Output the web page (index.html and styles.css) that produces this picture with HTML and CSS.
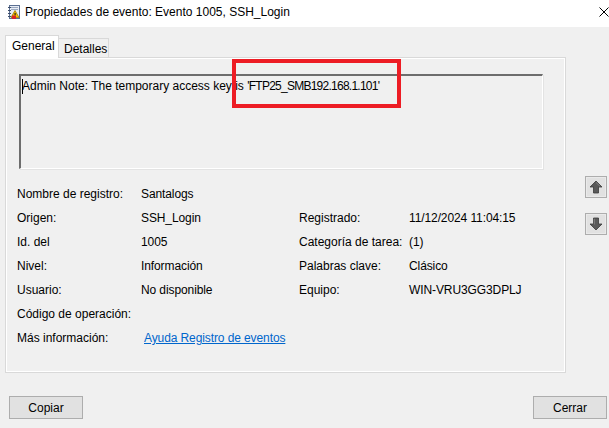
FILE: index.html
```html
<!DOCTYPE html>
<html lang="es">
<head>
<meta charset="utf-8">
<title>Propiedades de evento</title>
<link rel="stylesheet" href="styles.css">
</head>
<body>
<div class="window">
  <div class="titlebar">
    <svg class="app-icon" width="16" height="16" viewBox="0 0 16 16">
      <rect x="3.5" y="1.5" width="10" height="13" fill="#e8edf5" stroke="#5b6f92"/>
      <rect x="5" y="3" width="7" height="1" fill="#9aa8c0"/>
      <rect x="5" y="5" width="7" height="1" fill="#9aa8c0"/>
      <g fill="#3d4d6a">
        <rect x="2" y="3" width="3" height="1"/>
        <rect x="2" y="6" width="3" height="1"/>
        <rect x="2" y="9" width="3" height="1"/>
        <rect x="2" y="12" width="3" height="1"/>
      </g>
      <path d="M9 6.5 L13 13.5 L5 13.5 Z" fill="#f5c400" stroke="#a07a00" stroke-width="0.8"/>
      <rect x="8.5" y="9" width="1.2" height="2.4" fill="#222"/>
      <rect x="6" y="11.5" width="4" height="3.5" fill="#d8232a"/>
    </svg>
    <span class="title">Propiedades de evento: Evento 1005, SSH_Login</span>
    <svg class="close" width="10" height="10" viewBox="0 0 10 10">
      <path d="M0.5 0.5 L9.5 9.5 M9.5 0.5 L0.5 9.5" stroke="#000" stroke-width="1"/>
    </svg>
  </div>

  <div class="tabs">
    <div class="tab active">General</div>
    <div class="tab">Detalles</div>
  </div>

  <div class="main">
    <div class="panel">
      <div class="textbox"><span class="caret"></span>Admin Note: The temporary access key is <span class="key">'FTP25_SMB192.168.1.101'</span></div>
      <div class="fields">
        <div class="lbl">Nombre de registro:</div><div class="val">Santalogs</div><div></div><div></div>
        <div class="lbl">Origen:</div><div class="val">SSH_Login</div><div class="lbl">Registrado:</div><div class="val">11/12/2024 11:04:15</div>
        <div class="lbl">Id. del</div><div class="val">1005</div><div class="lbl">Categoría de tarea:</div><div class="val">(1)</div>
        <div class="lbl">Nivel:</div><div class="val">Información</div><div class="lbl">Palabras clave:</div><div class="val">Clásico</div>
        <div class="lbl">Usuario:</div><div class="val">No disponible</div><div class="lbl">Equipo:</div><div class="val">WIN-VRU3GG3DPLJ</div>
        <div class="lbl">Código de operación:</div><div></div><div></div><div></div>
        <div class="lbl">Más información:</div><div class="val"><a class="link" href="#">Ayuda Registro de eventos</a></div><div></div><div></div>
      </div>
    </div>
    <div class="side">
      <div class="arrow-btn">
        <svg width="16" height="16" viewBox="0 0 16 16">
          <path d="M8 2 L14 8 L10.5 8 L10.5 14 L5.5 14 L5.5 8 L2 8 Z" fill="#5a5a5a" stroke="#3a3a3a" stroke-width="0.8" stroke-linejoin="round"/>
          <path d="M8 3.5 L12 7.3" stroke="#8c8c8c" stroke-width="0.8"/>
        </svg>
      </div>
      <div class="arrow-btn">
        <svg width="16" height="16" viewBox="0 0 16 16">
          <path d="M8 14 L14 8 L10.5 8 L10.5 2 L5.5 2 L5.5 8 L2 8 Z" fill="#5a5a5a" stroke="#3a3a3a" stroke-width="0.8" stroke-linejoin="round"/>
          <path d="M6.3 2.8 L6.3 8.5" stroke="#8c8c8c" stroke-width="0.8"/>
        </svg>
      </div>
    </div>
  </div>

  <div class="footer">
    <button class="btn">Copiar</button>
    <button class="btn">Cerrar</button>
  </div>

  <div class="highlight"></div>
</div>
</body>
</html>
```

FILE: styles.css
```css
* { box-sizing: border-box; }

html, body {
  margin: 0;
  padding: 0;
}

body {
  width: 609px;
  height: 428px;
  background: #f0f0f0;
  font-family: "Liberation Sans", Arial, sans-serif;
  font-size: 12px;
  color: #000;
  overflow: hidden;
}

.window {
  position: relative;
  width: 609px;
  height: 428px;
}

.titlebar {
  height: 27px;
  background: #fff;
  display: flex;
  align-items: center;
  padding-left: 6px;
  padding-bottom: 3px;
}

.app-icon { flex: none; }

.title {
  margin-left: 3px;
  font-size: 12px;
  color: #000;
}

.close {
  margin-left: auto;
  flex: none;
}

.tabs {
  display: flex;
  align-items: flex-end;
  padding-left: 5px;
  margin-top: 8px;
  height: 22px;
}

.tab {
  height: 19px;
  border: 1px solid #d9d9d9;
  border-bottom: none;
  border-left: none;
  background: #f0f0f0;
  padding: 3px 5px 0 5px;
  width: 50px;
}

.tab.active {
  width: 54px;
  height: 23px;
  border-left: 1px solid #d9d9d9;
  background: #fff;
  padding: 3px 0 0 6px;
  position: relative;
  z-index: 1;
  margin-bottom: -1px;
}

.main {
  display: flex;
}

.panel {
  margin-left: 5px;
  width: 561px;
  height: 316px;
  border: 1px solid #d9d9d9;
  box-shadow: inset 1px 1px 0 #fff, inset -1px -1px 0 #fff;
  background: #f0f0f0;
}

.textbox {
  margin: 16px 0 0 13px;
  width: 524px;
  height: 95px;
  border-top: 2px solid #6d6d6d;
  border-left: 2px solid #6d6d6d;
  border-right: 1px solid #fff;
  border-bottom: 1px solid #fff;
  box-shadow: 1px 1px 0 #e3e3e3;
  background: #f0f0f0;
  padding: 3px 0 0 1px;
  line-height: 15px;
  white-space: nowrap;
}

.key {
  letter-spacing: -0.75px;
}

.caret {
  display: inline-block;
  width: 1px;
  height: 15px;
  background: #000;
  vertical-align: top;
  margin-right: -1px;
}

.fields {
  margin: 13px 0 0 11px;
  display: grid;
  grid-template-columns: 124px 158px 110px auto;
  grid-auto-rows: 24px;
  align-items: center;
}

.lbl, .val {
  white-space: nowrap;
}

.val { letter-spacing: -0.1px; }

.link {
  color: #0066cc;
  text-decoration: underline;
  margin-left: 3px;
}

.side {
  display: flex;
  flex-direction: column;
  padding: 119px 0 0 19px;
  gap: 15px;
}

.arrow-btn {
  width: 22px;
  height: 22px;
  border: 1px solid #adadad;
  background: #e1e1e1;
  display: flex;
  align-items: center;
  justify-content: center;
  box-shadow: inset 0 0 0 1px #eaeaea;
}

.footer {
  margin-top: 23px;
  display: flex;
  justify-content: space-between;
  padding: 0 2px 0 9px;
}

.btn {
  width: 74px;
  height: 23px;
  border: 1px solid #adadad;
  background: #e1e1e1;
  font-family: "Liberation Sans", Arial, sans-serif;
  font-size: 12px;
  color: #000;
  padding: 0;
}

.highlight {
  position: absolute;
  left: 232px;
  top: 59px;
  width: 169px;
  height: 49px;
  border: 4px solid #ed1c24;
}
```
